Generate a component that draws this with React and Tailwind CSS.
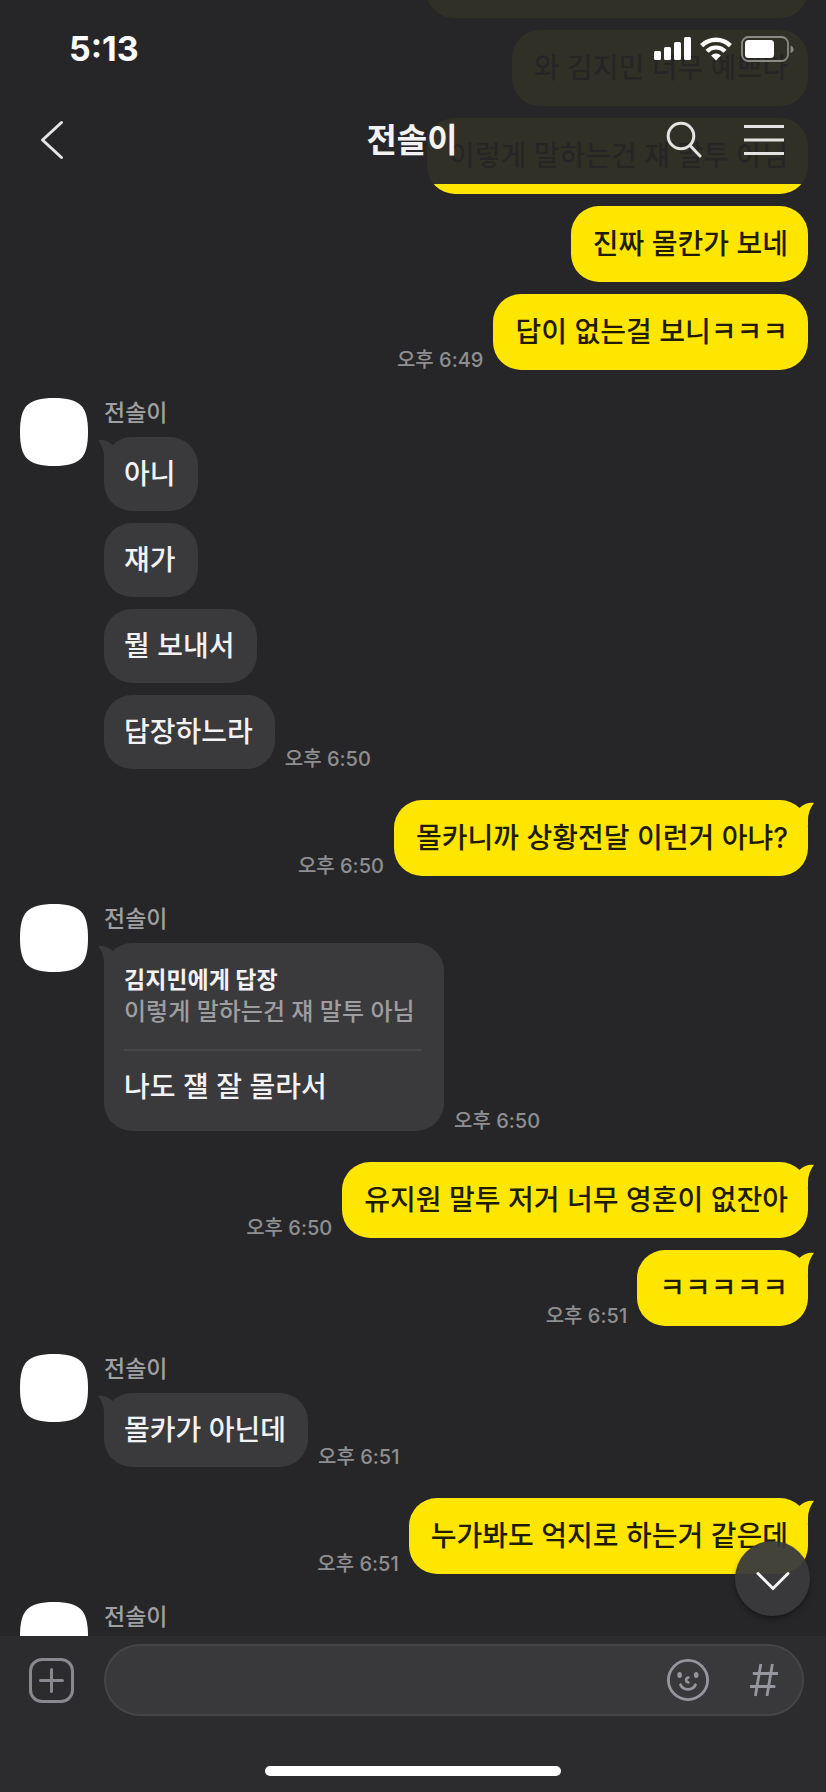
import React from 'react';

const FRIEND = '전솔이';

const conversation = [
  {
    from: 'me',
    messages: [
      { text: '', blank: true },
      { text: '와 김지민 너무 예쁘다' },
      { text: '이렇게 말하는건 쟤 말투 아님' },
      { text: '진짜 몰칸가 보네' },
      { text: '답이 없는걸 보니ㅋㅋㅋ', time: '오후 6:49' },
    ],
  },
  {
    from: 'friend',
    messages: [
      { text: '아니', tail: true },
      { text: '쟤가' },
      { text: '뭘 보내서' },
      { text: '답장하느라', time: '오후 6:50' },
    ],
  },
  {
    from: 'me',
    messages: [{ text: '몰카니까 상황전달 이런거 아냐?', time: '오후 6:50', tail: true }],
  },
  {
    from: 'friend',
    messages: [
      {
        text: '나도 쟬 잘 몰라서',
        time: '오후 6:50',
        tail: true,
        reply: { title: '김지민에게 답장', quote: '이렇게 말하는건 쟤 말투 아님' },
      },
    ],
  },
  {
    from: 'me',
    messages: [
      { text: '유지원 말투 저거 너무 영혼이 없잔아', time: '오후 6:50', tail: true },
      { text: 'ㅋㅋㅋㅋㅋ', time: '오후 6:51', tail: true },
    ],
  },
  {
    from: 'friend',
    messages: [{ text: '몰카가 아닌데', time: '오후 6:51', tail: true }],
  },
  {
    from: 'me',
    messages: [{ text: '누가봐도 억지로 하는거 같은데', time: '오후 6:51', tail: true }],
  },
  { from: 'friend', messages: [] },
];

/* ── Status bar icons ── */
const SignalIcon = () => (
  <svg width="37" height="24" viewBox="0 0 37 24" fill="white" aria-hidden="true">
    <rect x="0" y="14" width="7" height="9" rx="1.5" />
    <rect x="10" y="10" width="7" height="13" rx="1.5" />
    <rect x="20" y="5" width="7" height="18" rx="1.5" />
    <rect x="30" y="0" width="7" height="23" rx="1.5" />
  </svg>
);

const WifiIcon = () => (
  <svg width="32" height="24" viewBox="0 0 32 24" fill="none" stroke="white" aria-hidden="true">
    <path d="M1.6 8.6a20.5 20.5 0 0 1 28.8 0" strokeWidth="4.4" />
    <path d="M7 14.2a12.8 12.8 0 0 1 18 0" strokeWidth="4.2" />
    <path d="M16 23.5l-4.9-4.9a7 7 0 0 1 9.8 0z" fill="white" stroke="none" />
  </svg>
);

const BatteryIcon = () => (
  <svg width="53" height="26" viewBox="0 0 53 26" fill="none" aria-hidden="true">
    <rect x="1" y="1" width="46" height="24" rx="6.5" stroke="#8b8a87" strokeWidth="1.8" />
    <rect x="4" y="4" width="29" height="18" rx="3.5" fill="white" />
    <path d="M49.5 9.5c4 1.4 4 6.4 0 7.6z" fill="#8b8a87" />
  </svg>
);

/* ── Bubble tail, drawn for the left side ── */
const Tail = ({ mine }) => (
  <svg
    width="20"
    height="26"
    viewBox="0 0 20 26"
    aria-hidden="true"
    className={
      mine
        ? 'absolute top-0 -right-1.5 -scale-x-100 fill-[#ffe600]'
        : 'absolute top-0 -left-1.5 fill-[#3a3a3c]'
    }
  >
    <path d="M0 2.8Q8.5 2 14 7.5L20 14 6 26V20Q6 11 0 2.8Z" />
  </svg>
);

const Avatar = () => (
  <svg width="68" height="68" viewBox="0 0 68 68" fill="white" className="shrink-0" aria-hidden="true">
    <path d="M0 34C0 8 8 0 34 0S68 8 68 34 60 68 34 68 0 60 0 34Z" />
  </svg>
);

const Time = ({ children }) => (
  <time className="shrink-0 text-[20px] leading-5 font-medium text-[#8f8f91]">{children}</time>
);

const MyMessage = ({ message }) => (
  <li className="flex items-end justify-end gap-2.5">
    {message.time && <Time>{message.time}</Time>}
    <div
      className={`relative min-h-[76px] rounded-[28px] bg-[#ffe600] py-5 pr-5 pl-[22px] text-[28px] leading-9 font-medium text-[#1f1c00] ${
        message.blank ? 'w-[382px]' : ''
      }`}
    >
      {message.tail && <Tail mine />}
      <span className="relative">{message.text}</span>
    </div>
  </li>
);

const FriendMessage = ({ message }) => (
  <li className="flex items-end gap-2.5">
    <div
      className={`relative rounded-[28px] bg-[#3a3a3c] pr-[22px] pl-5 text-[28px] leading-9 font-medium text-[#f2f2f4] ${
        message.reply ? 'pt-[21px] pb-[26px]' : 'py-[19px]'
      }`}
    >
      {message.tail && <Tail />}
      {message.reply && (
        <div className="relative mb-[18px] min-w-[298px] border-b-2 border-[#474749] pb-[21px]">
          <p className="text-[23px] leading-8 font-bold">{message.reply.title}</p>
          <p className="text-2xl leading-8 text-[#9e9ea0]">{message.reply.quote}</p>
        </div>
      )}
      <span className="relative">{message.text}</span>
    </div>
    {message.time && <Time>{message.time}</Time>}
  </li>
);

const FriendGroup = ({ messages }) => (
  <section className="mt-7 flex gap-4">
    <Avatar />
    <div>
      <h2 className="mb-[9px] text-[23px] leading-[30px] font-medium text-[#a0a0a2]">{FRIEND}</h2>
      <ul className="flex flex-col gap-3">
        {messages.map((message, i) => (
          <FriendMessage key={i} message={message} />
        ))}
      </ul>
    </div>
  </section>
);

const MyGroup = ({ messages }) => (
  <ul className="mt-[31px] flex flex-col gap-3">
    {messages.map((message, i) => (
      <MyMessage key={i} message={message} />
    ))}
  </ul>
);

const Header = () => (
  <header className="absolute inset-x-0 top-0 z-10 bg-[#262628]/95 pb-0.5">
    <div className="flex h-[98px] items-center justify-between pr-8 pl-[69px] text-white">
      <span className="text-[34px] leading-10 font-bold">5:13</span>
      <div className="flex items-center gap-[9px]">
        <SignalIcon />
        <WifiIcon />
        <BatteryIcon />
      </div>
    </div>
    <nav className="grid h-[84px] grid-cols-[1fr_auto_1fr] items-center pr-[42px] pl-10 text-[#e4e4e2]">
      <button type="button" aria-label="뒤로" className="justify-self-start">
        <svg width="24" height="40" viewBox="0 0 24 40" fill="none" stroke="currentColor" strokeWidth="3" strokeLinecap="round" strokeLinejoin="round">
          <path d="M21.5 2.5 2.5 20l19 17.5" />
        </svg>
      </button>
      <h1 className="text-[33px] leading-10 font-bold text-[#f2f2f2]">{FRIEND}</h1>
      <div className="flex items-center gap-[42px] justify-self-end">
        <button type="button" aria-label="검색">
          <svg width="36" height="38" viewBox="0 0 36 38" fill="none" stroke="currentColor" strokeWidth="3" strokeLinecap="round">
            <circle cx="15" cy="15" r="12.8" />
            <path d="M24 24.5 34 35" />
          </svg>
        </button>
        <button type="button" aria-label="메뉴">
          <svg width="40" height="32" viewBox="0 0 40 32" stroke="currentColor" strokeWidth="3">
            <path d="M0 2.5h40M0 16h40M0 29.5h40" />
          </svg>
        </button>
      </div>
    </nav>
  </header>
);

const Composer = () => (
  <footer className="shrink-0 bg-[#2c2c2e] pt-2 pb-4">
    <div className="flex items-center pr-[22px] pl-7">
      <button type="button" aria-label="첨부" className="mr-[29px] text-[#88888e]">
        <svg width="47" height="47" viewBox="0 0 47 47" fill="none" stroke="currentColor" strokeWidth="3" strokeLinecap="round">
          <rect x="2.5" y="2.5" width="42" height="42" rx="11.5" />
          <path d="M12.5 23.5h22M23.5 12.5v22" />
        </svg>
      </button>
      <div className="flex h-[72px] min-w-0 flex-1 items-center rounded-full border-2 border-[#454547] bg-[#39393b] pr-6 pl-8 text-[#96969e]">
        <input
          type="text"
          aria-label="메시지 입력"
          className="h-full min-w-0 flex-1 bg-transparent text-[28px] text-[#f2f2f4] outline-none"
        />
        <button type="button" aria-label="이모티콘" className="mr-10">
          <svg width="44" height="44" viewBox="0 0 44 44" fill="none" stroke="currentColor" strokeLinecap="round">
            <circle cx="22" cy="22" r="19.6" strokeWidth="2.8" />
            <path d="M14.5 26.8c2.6 6 12.4 6 15 0" strokeWidth="2.8" />
            <path d="M22.4 19.6c-3 .6-3 4.2 0 4.8" strokeWidth="2.6" />
            <ellipse cx="13.6" cy="17" rx="2.3" ry="3" fill="currentColor" stroke="none" />
            <ellipse cx="30.2" cy="17" rx="2.3" ry="3" fill="currentColor" stroke="none" />
          </svg>
        </button>
        <button type="button" aria-label="샵 검색">
          <svg width="28" height="34" viewBox="0 0 28 34" fill="none" stroke="currentColor" strokeWidth="2.8">
            <path d="M10.8 1 5.4 33M22.4 1 17 33M2.8 10.5H28M0 23.5h25.3" />
          </svg>
        </button>
      </div>
    </div>
    <div className="mx-auto mt-[50px] h-2.5 w-[296px] rounded-full bg-white" />
  </footer>
);

export default function App() {
  return (
    <div className="relative flex h-screen flex-col bg-[#262628] font-['Inter','Noto_Sans_CJK_KR',sans-serif]">
      <Header />

      <main className="relative min-h-0 flex-1 overflow-hidden">
        {/* Scrolled so the oldest bubble is cut by the top edge */}
        <div className="-mt-[89px] pr-[18px] pl-5">
          {conversation.map((group, i) =>
            group.from === 'me' ? (
              <MyGroup key={i} messages={group.messages} />
            ) : (
              <FriendGroup key={i} messages={group.messages} />
            )
          )}
        </div>

        <button
          type="button"
          aria-label="맨 아래로"
          className="absolute right-4 bottom-5 flex size-[75px] items-center justify-center rounded-full bg-[#3a3a3d]/95 text-[#f5f5f5] shadow-md shadow-black/30"
        >
          <svg width="34" height="20" viewBox="0 0 34 20" fill="none" stroke="currentColor" strokeWidth="3" strokeLinecap="round" className="mt-1">
            <path d="M2 2.5 17 17.5 32 2.5" />
          </svg>
        </button>
      </main>

      <Composer />
    </div>
  );
}
